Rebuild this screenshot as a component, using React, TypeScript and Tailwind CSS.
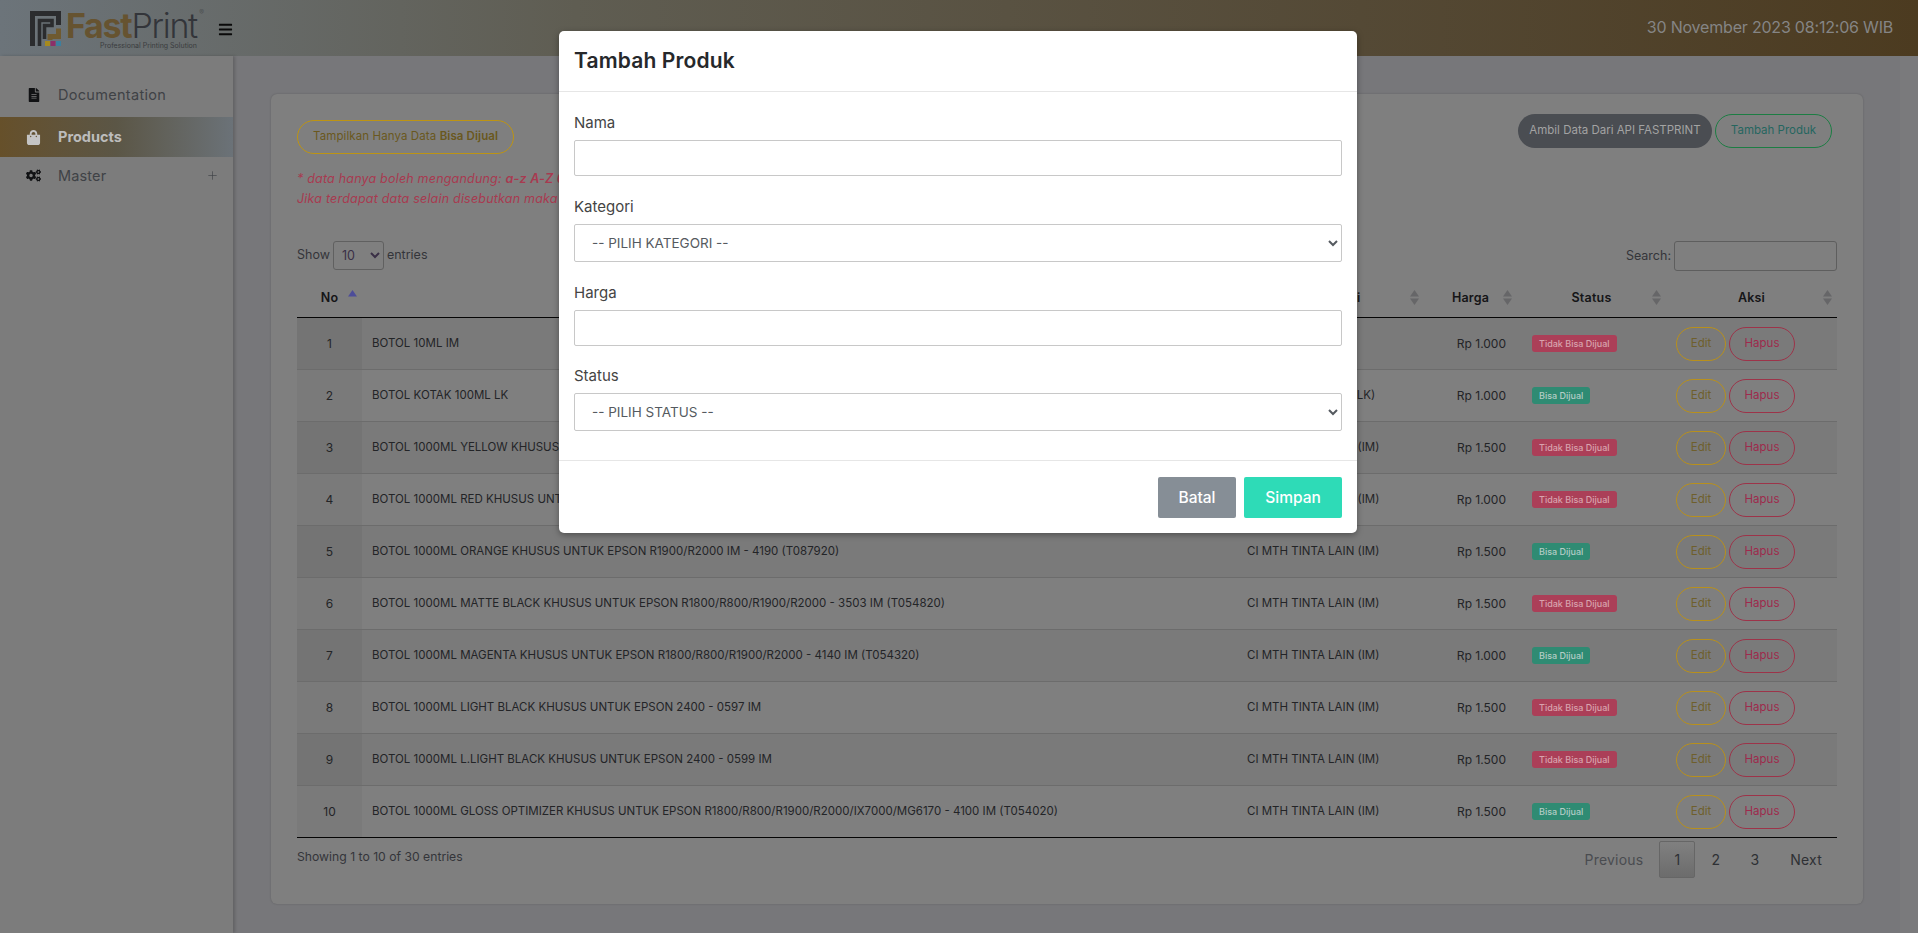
import React from "react";
import { FaFileAlt, FaShoppingBag, FaCogs, FaBars } from "react-icons/fa";
import { Plus } from "lucide-react";

const rows: [string, string, string, boolean][] = [
  ["BOTOL 10ML IM", "L MTH TINTA (IM)", "1.000", false],
  ["BOTOL KOTAK 100ML LK", "L MTH TINTA LAIN (LK)", "1.000", true],
  ["BOTOL 1000ML YELLOW KHUSUS UNTUK EPSON R1800/R800/R1900/R2000 - 4120 IM (T054420)", "CI MTH TINTA LAIN (IM)", "1.500", false],
  ["BOTOL 1000ML RED KHUSUS UNTUK EPSON R1800/R800/R1900/R2000 - 3500 IM (T054720)", "CI MTH TINTA LAIN (IM)", "1.000", false],
  ["BOTOL 1000ML ORANGE KHUSUS UNTUK EPSON R1900/R2000 IM - 4190 (T087920)", "CI MTH TINTA LAIN (IM)", "1.500", true],
  ["BOTOL 1000ML MATTE BLACK KHUSUS UNTUK EPSON R1800/R800/R1900/R2000 - 3503 IM (T054820)", "CI MTH TINTA LAIN (IM)", "1.500", false],
  ["BOTOL 1000ML MAGENTA KHUSUS UNTUK EPSON R1800/R800/R1900/R2000 - 4140 IM (T054320)", "CI MTH TINTA LAIN (IM)", "1.000", true],
  ["BOTOL 1000ML LIGHT BLACK KHUSUS UNTUK EPSON 2400 - 0597 IM", "CI MTH TINTA LAIN (IM)", "1.500", false],
  ["BOTOL 1000ML L.LIGHT BLACK KHUSUS UNTUK EPSON 2400 - 0599 IM", "CI MTH TINTA LAIN (IM)", "1.500", false],
  ["BOTOL 1000ML GLOSS OPTIMIZER KHUSUS UNTUK EPSON R1800/R800/R1900/R2000/IX7000/MG6170 - 4100 IM (T054020)", "CI MTH TINTA LAIN (IM)", "1.500", true],
];

function Logo() {
  return (
    <div className="flex items-start w-[188px]">
      <svg width="31" height="35" viewBox="0 0 31 35" className="shrink-0 mt-[11px]" fill="none">
        <path d="M2.5 35V2.5H28.5V14" stroke="#2b2c2e" strokeWidth="5" />
        <path d="M9.5 35V9.5H22V14.5H14.5V28" stroke="#2b2c2e" strokeWidth="3.6" />
        <path d="M28.5 17.5V25.5H20V29" stroke="#6f5a30" strokeWidth="5" />
        <rect x="15" y="30" width="5" height="5" fill="#a68a1e" />
        <rect x="20.5" y="30" width="5" height="5" fill="#8c2f68" />
        <rect x="26" y="30" width="5" height="5" fill="#3d7f9e" />
      </svg>
      <div className="ml-[5px] mt-[10px] flex flex-col items-end relative">
        <div className="text-[34px] leading-[31px] tracking-[-1.3px] whitespace-nowrap">
          <span className="font-bold text-[#665330]">Fast</span>
          <span className="font-light text-[#33353a]">Print</span>
        </div>
        <div className="text-[7px] leading-[9px] text-[#3a3c3e] whitespace-nowrap">Professional Printing Solution</div>
        <span className="absolute right-[-7px] top-[-1px] text-[7px] leading-none text-[#4e5052]">®</span>
      </div>
    </div>
  );
}

function Sort({ pos, active }: { pos: string; active?: boolean }) {
  return (
    <svg width="9" height="15" viewBox="0 0 9 15" className={"absolute top-[7px] " + pos}>
      <path d="M4.5 0L9 6.5H0Z" fill={active ? "#4d4d99" : "#666668"} />
      {!active && <path d="M4.5 15L9 8.5H0Z" fill="#666668" />}
    </svg>
  );
}

function Th({ children, cls, pos, active }: { children: React.ReactNode; cls: string; pos: string; active?: boolean }) {
  return (
    <th className={"relative h-[35px] border-b border-[#050505] text-[12.5px] tracking-[0.2px] font-semibold text-[#151517] align-middle pt-0 pb-[3px] " + cls}>
      {children}
      <Sort pos={pos} active={active} />
    </th>
  );
}

function Row({ r, i }: { r: [string, string, string, boolean]; i: number }) {
  const odd = i % 2 === 0;
  const last = i === rows.length - 1;
  const border = last ? "border-[#050505]" : "border-[#6c6c6c]";
  const bg = odd ? "bg-[#7a7a7a]" : "bg-[#7f7f7f]";
  return (
    <tr className="h-[52px] text-[11.5px] text-[#232427]">
      <td className={"border-b text-center text-[12px] " + border + " " + (odd ? "bg-[#747474]" : "bg-[#7a7a7a]")}>{i + 1}</td>
      <td className={"border-b pl-[10px] whitespace-nowrap overflow-hidden " + border + " " + bg}>{r[0]}</td>
      <td className={"border-b pl-[10px] whitespace-nowrap " + border + " " + bg}>{r[1]}</td>
      <td className={"border-b text-right pr-[16px] text-[12px] " + border + " " + bg}>Rp {r[2]}</td>
      <td className={"border-b pl-[10px] " + border + " " + bg}>
        {r[3] ? (
          <span className="inline-flex items-center h-[17px] px-[7px] rounded-[3px] bg-[#2f8b73] text-[#b4cdc6] text-[9px] font-medium">Bisa Dijual</span>
        ) : (
          <span className="inline-flex items-center h-[17px] px-[7px] rounded-[3px] bg-[#ab3f58] text-[#d8a3ae] text-[9px] font-medium">Tidak Bisa Dijual</span>
        )}
      </td>
      <td className={"border-b pl-[10px] " + border + " " + bg}>
        <div className="flex gap-[3px]">
          <span className="flex items-center justify-center w-[50px] h-[34px] rounded-[17px] border border-[#b8901c] text-[#6f5f2c] text-[11.5px]">Edit</span>
          <span className="flex items-center justify-center w-[66px] h-[34px] rounded-[17px] border border-[#9d3349] text-[#9e2a4c] text-[11.5px]">Hapus</span>
        </div>
      </td>
    </tr>
  );
}

function Field({ label, select, mt }: { label: string; select?: string; mt: string }) {
  return (
    <div className={mt}>
      <div className="h-[20px] leading-[20px] text-[15px] text-[#444] mb-[7px]">{label}</div>
      {select ? (
        <select className="w-full h-[38px] border border-[#c8c8c8] rounded-[2px] bg-white pl-[13px] pr-[4px] text-[13.5px] text-[#555a60] outline-none">
          <option>{select}</option>
        </select>
      ) : (
        <input className="block w-full h-[36px] border border-[#c8c8c8] rounded-[2px] bg-white outline-none" />
      )}
    </div>
  );
}

export default function App() {
  return (
    <div className="relative h-[933px] w-full overflow-hidden flex flex-col bg-[#77777a] font-['Inter',sans-serif]">
      <header className="h-[56px] shrink-0 flex items-start pl-[30px] pr-[25px] bg-gradient-to-r from-[#6c747a] via-[#5f5d52] via-30% to-[#4c3b20]">
        <Logo />
        <FaBars className="mt-[22px] text-[#0a0a0a]" size={15} />
        <div className="ml-auto mt-[17px] text-[16px] leading-[20px] tracking-[-0.2px] text-[#858585]">30 November 2023 08:12:06 WIB</div>
      </header>
      <div className="flex-1 flex min-h-0">
        <aside className="w-[233px] shrink-0 bg-[#7c7c7c] pt-[19px] shadow-[2px_0_3px_rgba(0,0,0,0.18)] z-10">
          <div className="h-[42px] pb-[2px] flex items-center pl-[27px] text-[#3f4246] text-[14.5px] tracking-[0.3px]">
            <FaFileAlt className="ml-[0px] mr-[17px] text-[#111214]" size={14} />
            Documentation
          </div>
          <div className="h-[40px] flex items-center pl-[26px] font-bold text-[#bcbcbc] text-[14.5px] bg-gradient-to-r from-[#66502a] via-[#5b5646] via-50% to-[#6b7278]">
            <FaShoppingBag className="mr-[17px] text-[#c4c4c4]" size={15} />
            Products
          </div>
          <div className="h-[40px] pb-[3px] flex items-center pl-[26px] pr-[14px] text-[#3f4246] text-[14.5px] tracking-[0.15px]">
            <FaCogs className="mr-[17px] text-[#111214]" size={15} />
            Master
            <Plus className="ml-auto text-[#3e4146]" size={13} strokeWidth={1.2} />
          </div>
        </aside>
        <main className="flex-1 min-w-0 pl-[38px] pt-[38px] pr-[37px] flex items-start">
          <section className="w-full h-[810px] rounded-[6px] bg-[#7f7f7f] shadow-[0_0_2px_rgba(0,0,0,0.22)] px-[26px] pt-[20px]">
            <div className="h-[127px] flex justify-between items-start pr-[5px]">
              <div className="pt-[6px]">
                <div className="inline-flex items-center h-[34px] px-[15px] rounded-[17px] border border-[#bd9413] text-[11.5px] tracking-[0.1px] text-[#6a5820]">
                  Tampilkan Hanya Data&nbsp;<b className="font-semibold">Bisa Dijual</b>
                </div>
                <p className="mt-[15px] text-[12.5px] leading-[20px] italic text-[#a83a50] tracking-[0.2px]">
                  * data hanya boleh mengandung: <b className="font-semibold">a-z A-Z 0-9</b> dan spasi
                  <br />
                  Jika terdapat data selain disebutkan maka data tidak akan tersimpan
                </p>
              </div>
              <div className="flex gap-[3px]">
                <div className="flex items-center justify-center w-[194px] h-[34px] rounded-[17px] bg-[#4a4d52] text-[#a3a3a3] text-[11.5px]">Ambil Data Dari API FASTPRINT</div>
                <div className="flex items-center justify-center w-[117px] h-[34px] rounded-[17px] border border-[#1c7d43] text-[#26665f] text-[11.5px]">Tambah Produk</div>
              </div>
            </div>
            <div className="h-[42px] flex items-start justify-between text-[12.5px] text-[#34353a]">
              <div className="flex items-center gap-[3px] h-[29px]">
                Show
                <select className="w-[51px] h-[29px] border border-[#606060] rounded-[3px] bg-transparent pl-[4px] text-[12.5px] text-[#3a2f46] outline-none">
                  <option>10</option>
                </select>
                entries
              </div>
              <div className="flex items-center gap-[3px] h-[30px]">
                Search:
                <input className="w-[163px] h-[30px] border border-[#5e5e5e] rounded-[3px] bg-transparent outline-none" />
              </div>
            </div>
            <table className="w-full table-fixed border-separate border-spacing-0">
              <colgroup>
                <col className="w-[65px]" />
                <col className="w-[875px]" />
                <col className="w-[194px]" />
                <col className="w-[91px]" />
                <col className="w-[144px]" />
                <col className="w-[171px]" />
              </colgroup>
              <thead>
                <tr>
                  <Th cls="text-center" pos="right-[5px]" active>No</Th>
                  <Th cls="text-center" pos="right-[6px]">Nama</Th>
                  <Th cls="text-center" pos="right-[12px]">Kategori</Th>
                  <Th cls="text-center pr-[12px]" pos="right-[10px]">Harga</Th>
                  <Th cls="text-center pr-[5px]" pos="right-[5px]">Status</Th>
                  <Th cls="text-center" pos="right-[5px]">Aksi</Th>
                </tr>
              </thead>
              <tbody>
                {rows.map((r, i) => (
                  <Row key={i} r={r} i={i} />
                ))}
              </tbody>
            </table>
            <div className="flex justify-between items-start pt-[3px]">
              <div className="mt-[6px] h-[20px] leading-[20px] text-[12.2px] text-[#34353a]">Showing 1 to 10 of 30 entries</div>
              <div className="flex items-center text-[14px] text-[#2e3034]">
                <span className="px-[14px] text-[#4a4c50] tracking-[0.2px]">Previous</span>
                <span className="w-[36px] h-[37px] ml-[2px] flex items-center justify-center border border-[#666] rounded-[2px] bg-gradient-to-b from-[#808080] to-[#6c6c6c]">1</span>
                <span className="w-[37px] ml-[2px] text-center">2</span>
                <span className="w-[37px] ml-[2px] text-center">3</span>
                <span className="pl-[17px] pr-[15px] tracking-[0.2px]">Next</span>
              </div>
            </div>
          </section>
        </main>
        <div className="w-[18px] shrink-0 bg-[#7a7a7c]" />
      </div>
      <div className="absolute inset-0 z-20 flex justify-center items-start pt-[31px] pr-[2px]">
        <div className="w-[798px] h-[502px] flex flex-col bg-white rounded-[5px] shadow-[0_2px_6px_rgba(0,0,0,0.35)]">
          <div className="h-[61px] shrink-0 flex items-center px-[15px] border-b border-[#e6e6e6]">
            <h2 className="text-[21px] font-semibold text-[#26282b] tracking-[0.15px]">Tambah Produk</h2>
          </div>
          <div className="px-[15px] h-[369px] shrink-0 border-b border-[#e6e6e6]">
            <Field label="Nama" mt="mt-[21px]" />
            <Field label="Kategori" select="-- PILIH KATEGORI --" mt="mt-[21px]" />
            <Field label="Harga" mt="mt-[21px]" />
            <Field label="Status" select="-- PILIH STATUS --" mt="mt-[20px]" />
          </div>
          <div className="flex justify-end gap-[8px] px-[15px] pt-[16px]">
            <button className="w-[78px] h-[41px] rounded-[2px] bg-[#868e96] text-white text-[15.5px] font-medium">Batal</button>
            <button className="w-[98px] h-[41px] rounded-[2px] bg-[#2edbb7] text-white text-[15.5px] font-medium">Simpan</button>
          </div>
        </div>
      </div>
    </div>
  );
}
